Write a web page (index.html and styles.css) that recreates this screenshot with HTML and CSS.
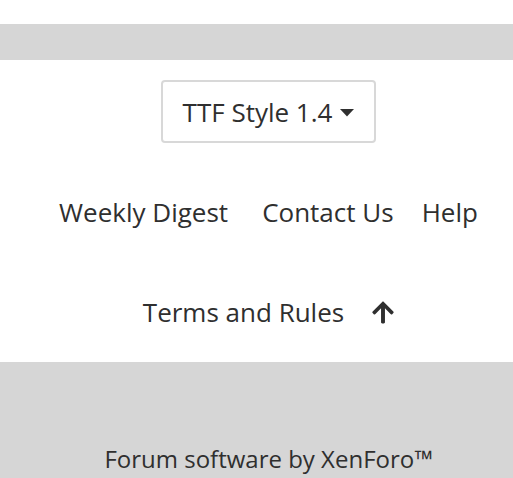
FILE: index.html
```html
<!DOCTYPE html>
<html>
<head>
<meta charset="utf-8">
<link rel="stylesheet" href="styles.css">
</head>
<body>
<div class="top-space"></div>
<div class="band"></div>
<div class="footer-main">
  <div class="style-row">
    <a class="style-btn" href="#">TTF Style 1.4 <svg class="caret" viewBox="0 0 14 8" width="14" height="8"><path d="M0 0h14L7 7.5z" fill="#2f2f2f"/></svg></a>
  </div>
  <ul class="links">
    <li class="wide"><a href="#">Weekly Digest</a></li>
    <li><a href="#">Contact Us</a></li>
    <li><a href="#">Help</a></li>
  </ul>
  <ul class="links">
    <li><a href="#">Terms and Rules</a></li>
    <li><a href="#" class="top-link"><svg viewBox="0 0 448 512" width="22" height="25"><path fill="#2f2f2f" d="M34.9 289.5l-22.2-22.2c-9.4-9.4-9.4-24.6 0-33.9L207 39c9.4-9.4 24.6-9.4 33.9 0l194.3 194.3c9.4 9.4 9.4 24.6 0 33.9L413 289.4c-9.5 9.5-25 9.3-34.3-.4L264 168.6V456c0 13.3-10.7 24-24 24h-32c-13.3 0-24-10.7-24-24V168.6L69.2 289.1c-9.3 9.8-24.8 10-34.3.4z"/></svg></a></li>
  </ul>
</div>
<div class="copyright">
  <p>Forum software by XenForo™</p>
</div>
</body>
</html>
```
FILE: styles.css
```css
html, body {
  margin: 0;
  padding: 0;
  background: #fff;
  font-family: "Open Sans", "Liberation Sans", sans-serif;
  color: #2f2f2f;
  font-size: 26px;
}
a { color: #2f2f2f; text-decoration: none; }
.top-space { height: 24px; }
.band { height: 36px; background: #d6d6d6; }
.footer-main {
  padding-left: 24px;
}
.style-row {
  display: flex;
  justify-content: center;
  padding-top: 20px;
  padding-bottom: 19px;
}
.style-btn {
  display: flex;
  align-items: center;
  gap: 8px;
  box-sizing: border-box;
  height: 63px;
  padding: 0 20px;
  border: 2px solid #d8d8d8;
  border-radius: 4px;
}
.caret { margin-top: 2px; }
.links {
  list-style: none;
  margin: 0;
  padding: 0;
  display: flex;
  justify-content: center;
  height: 100px;
  align-items: center;
}
.links li { padding: 0 14px; }
.links li.wide { padding-right: 20px; }
.top-link { display: flex; align-items: center; }
.copyright {
  box-sizing: border-box;
  background: #d6d6d6;
  padding-left: 24px;
  padding-top: 80px;
  height: 116px;
  text-align: center;
  font-size: 24px;
}
.copyright p { margin: 0; }
```
